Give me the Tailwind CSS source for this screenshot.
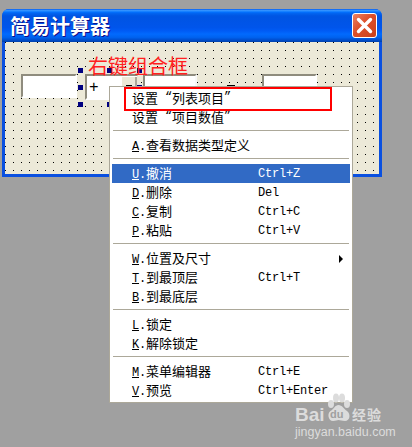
<!DOCTYPE html>
<html lang="zh">
<head>
<meta charset="utf-8">
<title>简易计算器</title>
<script src="https://cdn.jsdelivr.net/npm/@tailwindcss/browser@4"></script>
</head>
<body class="bg-[#a0a0a0] m-0">
<div class="relative w-[412px] h-[447px] overflow-hidden bg-[#a0a0a0] pt-[9px] pl-[2px] font-['Noto_Sans_CJK_SC','Noto_Sans_CJK_JP',sans-serif]">

  <!-- Window -->
  <div class="w-[380px] h-[168px] flex flex-col rounded-t-[7px] bg-[#0a50e0] overflow-hidden">
    <div class="h-[33px] shrink-0 flex items-center justify-between pl-[8px] pr-[5px] bg-[linear-gradient(180deg,#0058ee_0%,#3593ff_4%,#288eff_6%,#127dff_8%,#036ffc_10%,#0262ee_14%,#0057e5_20%,#0054e3_24%,#0055eb_56%,#005bf5_66%,#026afe_76%,#0062ef_86%,#0052d6_92%,#0040ab_100%)]">
      <span class="text-[20px] leading-[24px] font-bold text-white [text-shadow:1px_1px_0_#0f1089]">简易计算器</span>
      <div class="w-[25px] h-[25px] rounded-[3px] border border-white bg-[linear-gradient(135deg,#ec8263_0%,#dd4f2a_45%,#c9401c_100%)] flex items-center justify-center">
        <svg width="19" height="19" viewBox="0 0 19 19"><path d="M3.5 3.5 15.5 15.5M15.5 3.5 3.5 15.5" stroke="#fff" stroke-width="3.4" stroke-linecap="round" fill="none"/></svg>
      </div>
    </div>
    <div class="relative ml-[3px] mr-[3px] w-[374px] h-[132px] bg-[#ece9d8] bg-[conic-gradient(at_1px_1px,transparent_75%,#000_0)] bg-[size:8px_8px]">
      <!-- Design canvas controls -->
      <div class="absolute left-[16px] top-[32px] w-[56px] h-[24px] bg-white border-2 border-t-[#8f8c7e] border-l-[#8f8c7e] border-r-white border-b-white"></div>
      <div class="absolute left-[80px] top-[32px] w-[54px] h-[26px] bg-white border-2 border-t-[#8f8c7e] border-l-[#8f8c7e] border-r-[#ece9d8] border-b-white flex items-start justify-between">
        <span class="font-['Liberation_Mono',monospace] text-[16px] leading-[24px] ml-[2px] text-black">+</span>
        <div class="w-[15px] h-[22px] mt-[1px] bg-[#ece9d8] border-r-2 border-[#aca899] flex justify-center pt-[8px]"><div class="w-[6px] h-[1px] bg-black"></div></div>
      </div>
      <div class="absolute left-[138px] top-[32px] w-[54px] h-[26px] bg-white border-2 border-t-[#8f8c7e] border-l-[#8f8c7e] border-r-[#f8f8f8] border-b-white"></div>
      <div class="absolute left-[222px] top-[43px] w-[8px] h-[2px] bg-black"></div>
      <div class="absolute left-[257px] top-[32px] w-[55px] h-[26px] bg-white border-2 border-t-[#8f8c7e] border-l-[#8f8c7e] border-r-white border-b-white"></div>

      <!-- Selection handles -->
      <div class="absolute left-[73px] top-[26px] w-[5px] h-[5px] bg-[#000080]"></div>
      <div class="absolute left-[102px] top-[26px] w-[5px] h-[5px] bg-[#000080]"></div>
      <div class="absolute left-[132px] top-[26px] w-[5px] h-[5px] bg-[#000080]"></div>
      <div class="absolute left-[73px] top-[43px] w-[5px] h-[5px] bg-[#000080]"></div>
      <div class="absolute left-[132px] top-[43px] w-[5px] h-[5px] bg-[#000080]"></div>
      <div class="absolute left-[73px] top-[60px] w-[5px] h-[5px] bg-[#000080]"></div>
      <div class="absolute left-[102px] top-[60px] w-[5px] h-[5px] bg-[#000080]"></div>

      <span class="absolute left-[83px] top-[12px] text-[20px] leading-[24px] text-[#ff2020]">右键组合框</span>
    </div>
  </div>

  <!-- Context menu -->
  <div class="absolute left-[109px] top-[86px] w-[244px] h-[317px] bg-white border border-[#aca899] px-[2px] pt-[2px] flex flex-col text-[13px] text-black">
    <div class="h-[19px] pb-[2px] pl-[20px] flex items-center leading-[17px]">设置<span class="font-['Liberation_Mono',monospace] text-[12px] tracking-[-0.2px] whitespace-pre"> “</span>列表项目<span class="font-['Liberation_Mono',monospace] text-[12px]">”</span></div>
    <div class="h-[19px] pb-[2px] pl-[20px] flex items-center leading-[17px]">设置<span class="font-['Liberation_Mono',monospace] text-[12px] tracking-[-0.2px] whitespace-pre"> “</span>项目数值<span class="font-['Liberation_Mono',monospace] text-[12px]">”</span></div>
    <div class="h-[9px] pt-[3px]"><div class="mx-[1px] h-[1px] bg-[#aca899]"></div></div>

    <div class="h-[19px] pb-[2px] pl-[20px] grid grid-cols-[126px_81px_auto] items-center leading-[17px]"><span><span class="font-['Liberation_Mono',monospace] text-[12px] tracking-[-0.2px]"><u>A</u>.</span>查看数据类型定义</span></div>
    <div class="h-[9px] pt-[3px]"><div class="mx-[1px] h-[1px] bg-[#aca899]"></div></div>

    <div class="h-[19px] pb-[2px] pl-[20px] grid grid-cols-[126px_81px_auto] items-center leading-[17px] bg-[#316ac5] text-white"><span><span class="font-['Liberation_Mono',monospace] text-[12px] tracking-[-0.2px]"><u>U</u>.</span>撤消</span><span class="font-['Liberation_Mono',monospace] text-[12px] tracking-[-0.2px]">Ctrl+Z</span></div>
    <div class="h-[19px] pb-[2px] pl-[20px] grid grid-cols-[126px_81px_auto] items-center leading-[17px]"><span><span class="font-['Liberation_Mono',monospace] text-[12px] tracking-[-0.2px]"><u>D</u>.</span>删除</span><span class="font-['Liberation_Mono',monospace] text-[12px] tracking-[-0.2px]">Del</span></div>
    <div class="h-[19px] pb-[2px] pl-[20px] grid grid-cols-[126px_81px_auto] items-center leading-[17px]"><span><span class="font-['Liberation_Mono',monospace] text-[12px] tracking-[-0.2px]"><u>C</u>.</span>复制</span><span class="font-['Liberation_Mono',monospace] text-[12px] tracking-[-0.2px]">Ctrl+C</span></div>
    <div class="h-[19px] pb-[2px] pl-[20px] grid grid-cols-[126px_81px_auto] items-center leading-[17px]"><span><span class="font-['Liberation_Mono',monospace] text-[12px] tracking-[-0.2px]"><u>P</u>.</span>粘贴</span><span class="font-['Liberation_Mono',monospace] text-[12px] tracking-[-0.2px]">Ctrl+V</span></div>
    <div class="h-[9px] pt-[3px]"><div class="mx-[1px] h-[1px] bg-[#aca899]"></div></div>

    <div class="h-[19px] pb-[2px] pl-[20px] grid grid-cols-[126px_81px_auto] items-center leading-[17px]"><span><span class="font-['Liberation_Mono',monospace] text-[12px] tracking-[-0.2px]"><u>W</u>.</span>位置及尺寸</span><span></span><span class="w-0 h-0 border-y-[4px] border-y-transparent border-l-[4px] border-l-black"></span></div>
    <div class="h-[19px] pb-[2px] pl-[20px] grid grid-cols-[126px_81px_auto] items-center leading-[17px]"><span><span class="font-['Liberation_Mono',monospace] text-[12px] tracking-[-0.2px]"><u>T</u>.</span>到最顶层</span><span class="font-['Liberation_Mono',monospace] text-[12px] tracking-[-0.2px]">Ctrl+T</span></div>
    <div class="h-[19px] pb-[2px] pl-[20px] grid grid-cols-[126px_81px_auto] items-center leading-[17px]"><span><span class="font-['Liberation_Mono',monospace] text-[12px] tracking-[-0.2px]"><u>B</u>.</span>到最底层</span></div>
    <div class="h-[9px] pt-[3px]"><div class="mx-[1px] h-[1px] bg-[#aca899]"></div></div>

    <div class="h-[19px] pb-[2px] pl-[20px] grid grid-cols-[126px_81px_auto] items-center leading-[17px]"><span><span class="font-['Liberation_Mono',monospace] text-[12px] tracking-[-0.2px]"><u>L</u>.</span>锁定</span></div>
    <div class="h-[19px] pb-[2px] pl-[20px] grid grid-cols-[126px_81px_auto] items-center leading-[17px]"><span><span class="font-['Liberation_Mono',monospace] text-[12px] tracking-[-0.2px]"><u>K</u>.</span>解除锁定</span></div>
    <div class="h-[9px] pt-[3px]"><div class="mx-[1px] h-[1px] bg-[#aca899]"></div></div>

    <div class="h-[19px] pb-[2px] pl-[20px] grid grid-cols-[126px_81px_auto] items-center leading-[17px]"><span><span class="font-['Liberation_Mono',monospace] text-[12px] tracking-[-0.2px]"><u>M</u>.</span>菜单编辑器</span><span class="font-['Liberation_Mono',monospace] text-[12px] tracking-[-0.2px]">Ctrl+E</span></div>
    <div class="h-[19px] pb-[2px] pl-[20px] grid grid-cols-[126px_81px_auto] items-center leading-[17px]"><span><span class="font-['Liberation_Mono',monospace] text-[12px] tracking-[-0.2px]"><u>V</u>.</span>预览</span><span class="font-['Liberation_Mono',monospace] text-[12px] tracking-[-0.2px] whitespace-nowrap">Ctrl+Enter</span></div>
  </div>

  <!-- Red annotation box -->
  <div class="absolute left-[124px] top-[87px] w-[208px] h-[24px] border-[2px] border-[#ff0000]"></div>

  <!-- Baidu watermark -->
  <div class="absolute left-[295px] top-[393px] w-[92px] h-[46px] text-[#dcdcdc]">
    <span class="absolute left-0 top-[12px] font-['Liberation_Sans',sans-serif] font-bold text-[19px] leading-[20px]">Bai</span>
    <svg class="absolute left-[31px] top-0" width="25" height="30" viewBox="0 0 25 30" fill="#dcdcdc">
      <ellipse cx="5" cy="11" rx="3" ry="4"/><ellipse cx="10" cy="5" rx="3" ry="4.5"/><ellipse cx="16" cy="5" rx="3" ry="4.5"/><ellipse cx="21" cy="11" rx="3" ry="4"/>
      <path d="M12.5 12C9 12 8 16 4.500 18 1 20 2 28 7 28 10 28 11 27 12.500 27 14 27 16 28 19 28 24 28 25 21 21 18 18 16 16 12 12.500 12Z"/>
    </svg>
    <span class="absolute left-[35px] top-[15px] font-['Liberation_Sans',sans-serif] font-bold text-[11px] leading-[12px] text-[#a0a0a0]">du</span>
    <span class="absolute left-[57px] top-[13px] font-bold text-[14px] leading-[16px] tracking-[1px] whitespace-nowrap">经验</span>
    <span class="absolute left-0 top-[32px] font-['Liberation_Sans',sans-serif] text-[12.500px] leading-[14px] whitespace-nowrap">jingyan.baidu.com</span>
  </div>
</div>
</body>
</html>
